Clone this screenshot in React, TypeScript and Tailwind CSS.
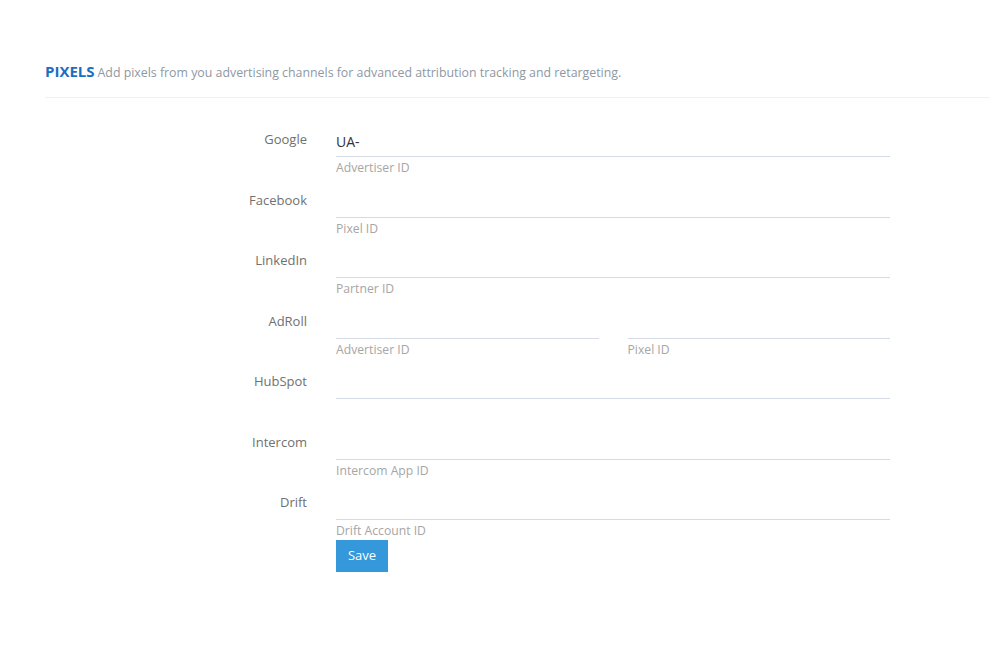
import React from "react";

type Field = { placeholder?: string; value?: string; helper?: string };
type Row = { label: string; fields: Field[] };

const rows: Row[] = [
  { label: "Google", fields: [{ value: "UA-", helper: "Advertiser ID" }] },
  { label: "Facebook", fields: [{ helper: "Pixel ID" }] },
  { label: "LinkedIn", fields: [{ helper: "Partner ID" }] },
  { label: "AdRoll", fields: [{ helper: "Advertiser ID" }, { helper: "Pixel ID" }] },
  { label: "HubSpot", fields: [{}] },
  { label: "Intercom", fields: [{ helper: "Intercom App ID" }] },
  { label: "Drift", fields: [{ helper: "Drift Account ID" }] },
];

const PixelField = ({ field }: { field: Field }) => (
  <div className="flex-1">
    <input
      defaultValue={field.value}
      className="block h-[27px] w-full border-0 border-b border-[#d5dbe6] bg-transparent pb-[3px] text-[14px] text-[#333] outline-none"
    />
    <div className="h-[18px] pt-[2px] text-[12.2px] leading-[18px] text-[#a6a6a6]">{field.helper ?? ""}</div>
  </div>
);

export default function App() {
  return (
    <div className="min-h-[650px] bg-white pt-[61px] font-['Open_Sans',sans-serif]">
      <div className="ml-[45px] border-b border-[#f1f1f1] pb-[14px]">
        <div className="flex items-baseline gap-[3px] leading-[20px]">
          <span className="text-[15px] font-bold text-[#1b6ec2]">PIXELS</span>
          <span className="text-[12.35px] text-[#8e98a3]">
            Add pixels from you advertising channels for advanced attribution tracking and retargeting.
          </span>
        </div>
      </div>

      <form className="mt-[32px] pl-[45px]" onSubmit={(e) => e.preventDefault()}>
        {rows.map((row) => (
          <div key={row.label} className="mb-[15.5px] flex gap-[29px]">
            <label className="-mt-[1px] w-[262px] text-right text-[13px] leading-[20px] text-[#707070]">
              {row.label}
            </label>
            <div className="flex w-[554px] gap-[29px]">
              {row.fields.map((f, i) => (
                <PixelField key={i} field={f} />
              ))}
            </div>
          </div>
        ))}
        <div className="-mt-[14px] flex gap-[29px]">
          <div className="w-[262px]" />
          <button
            type="submit"
            className="h-[32px] w-[52px] bg-[#3498db] text-[13px] text-white"
          >
            Save
          </button>
        </div>
      </form>
    </div>
  );
}
